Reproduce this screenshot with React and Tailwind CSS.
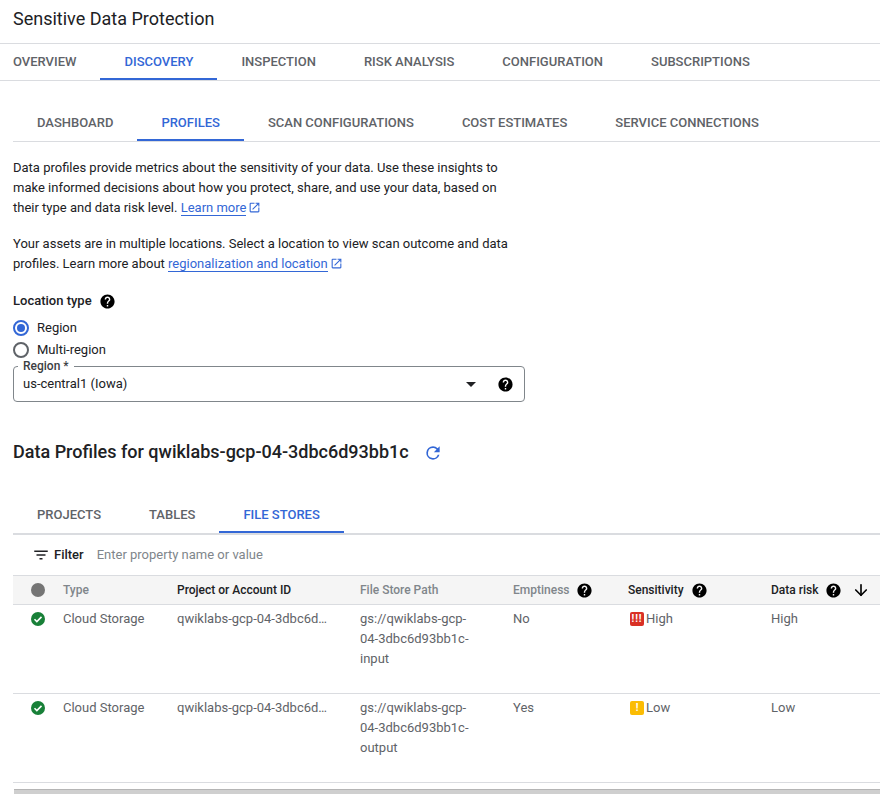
import { ArrowDown } from 'lucide-react'

const mainTabs = ['OVERVIEW', 'DISCOVERY', 'INSPECTION', 'RISK ANALYSIS', 'CONFIGURATION', 'SUBSCRIPTIONS']
const subTabs = ['DASHBOARD', 'PROFILES', 'SCAN CONFIGURATIONS', 'COST ESTIMATES', 'SERVICE CONNECTIONS']
const storeTabs = ['PROJECTS', 'TABLES', 'FILE STORES']

const rows = [
  { path: ['gs://qwiklabs-gcp-', '04-3dbc6d93bb1c-', 'input'], empty: 'No', level: 'High' },
  { path: ['gs://qwiklabs-gcp-', '04-3dbc6d93bb1c-', 'output'], empty: 'Yes', level: 'Low' },
]

function Help({ className = '' }) {
  return (
    <svg viewBox="0 0 24 24" className={`h-[17px] w-[17px] shrink-0 ${className}`}>
      <path
        fill="#000"
        d="M12 2C6.48 2 2 6.48 2 12s4.48 10 10 10 10-4.48 10-10S17.52 2 12 2zm1 17h-2v-2h2v2zm2.07-7.75-.9.92C13.45 12.9 13 13.5 13 15h-2v-.5c0-1.1.45-2.1 1.17-2.83l1.24-1.26c.37-.36.59-.86.59-1.41 0-1.1-.9-2-2-2s-2 .9-2 2H8c0-2.21 1.79-4 4-4s4 1.79 4 4c0 .88-.36 1.68-.93 2.25z"
      />
    </svg>
  )
}

function ExternalLink() {
  return (
    <svg viewBox="0 0 24 24" className="ml-[2px] inline-block h-[13px] w-[13px] align-[-2px]" fill="#3367d6">
      <path d="M19 19H5V5h7V3H5a2 2 0 0 0-2 2v14a2 2 0 0 0 2 2h14c1.1 0 2-.9 2-2v-7h-2v7zM14 3v2h3.59l-9.83 9.83 1.41 1.41L19 6.41V10h2V3h-7z" />
    </svg>
  )
}

function Tabs({ items, active, className = '', tabClass = '' }) {
  return (
    <div className={`flex border-b border-[#dadce0] ${className}`}>
      {items.map((t) => (
        <div
          key={t}
          className={`flex items-center border-b-[2px] px-6 pt-[2px] text-[13px] font-medium ${tabClass} ${
            t === active ? 'border-[#3367d6] text-[#3367d6]' : 'border-transparent text-[#5f6368]'
          }`}
        >
          {t}
        </div>
      ))}
    </div>
  )
}

function CheckDot() {
  return (
    <svg viewBox="0 0 16 16" className="h-[14px] w-[14px]">
      <circle cx="8" cy="8" r="8" fill="#188038" />
      <path d="M4 8.3l2.7 2.7L12 5.6" fill="none" stroke="#fff" strokeWidth="1.8" />
    </svg>
  )
}

function Level({ level }) {
  const high = level === 'High'
  return (
    <span className="ml-[2px] flex items-center gap-[2px]">
      <span
        className={`flex h-[14px] w-[14px] items-center justify-center rounded-[2px] text-[10px] leading-none font-bold text-white ${
          high ? 'bg-[#d93025] tracking-[1px]' : 'bg-[#fbbc04]'
        }`}
      >
        {high ? '!!!' : '!'}
      </span>
      {level}
    </span>
  )
}

export default function App() {
  return (
    <div className="h-[794px] w-[880px] overflow-hidden bg-white font-['Roboto',sans-serif] text-[13px] leading-5 text-[#202124]">
      <div className="flex h-11 items-center border-b border-[#dadce0] px-[13px] pb-[6px] text-[18px] text-[#202124]">
        Sensitive Data Protection
      </div>

      <Tabs items={mainTabs} active="DISCOVERY" className="h-[37px]" tabClass="first:pl-[13px] first:pr-6" />

      <div className="pl-[13px]">
        <Tabs items={subTabs} active="PROFILES" className="mt-[23px] h-[38px]" />

        <p className="mt-[16px] w-[500px]">
          Data profiles provide metrics about the sensitivity of your data. Use these insights to
          make informed decisions about how you protect, share, and use your data, based on
          their type and data risk level.{' '}
          <span className="whitespace-nowrap">
            <a className="border-b border-[#3367d6] text-[#3367d6]">Learn more</a>
            <ExternalLink />
          </span>
        </p>
        <p className="mt-4 w-[510px]">
          Your assets are in multiple locations. Select a location to view scan outcome and data
          profiles. Learn more about{' '}
          <span className="whitespace-nowrap">
            <a className="border-b border-[#3367d6] text-[#3367d6]">regionalization and location</a>
            <ExternalLink />
          </span>
        </p>

        <div className="mt-[17px] flex items-center gap-[7px] font-medium">
          Location type
          <Help />
        </div>
        <div className="mt-[6px] flex h-[22px] items-center gap-2">
          <span className="flex h-4 w-4 items-center justify-center rounded-full border-2 border-[#3367d6]">
            <span className="h-2 w-2 rounded-full bg-[#3367d6]" />
          </span>
          Region
        </div>
        <div className="flex h-[22px] items-center gap-2">
          <span className="h-4 w-4 rounded-full border-2 border-[#5f6368]" />
          Multi-region
        </div>

        <div className="relative mt-[5px] flex h-[36px] w-[512px] items-center rounded border border-[#80868b] pr-[10px] pl-[9px]">
          <span className="absolute top-[-9px] left-[4px] bg-white px-[5px] text-xs leading-4 font-medium text-[#3c4043]">
            Region *
          </span>
          <span className="flex-1">us-central1 (Iowa)</span>
          <span className="mr-[21px] h-0 w-0 border-x-[5px] border-t-[5px] border-x-transparent border-t-[#202124]" />
          <Help />
        </div>

        <div className="mt-[38px] flex items-center text-[18px] leading-6 font-medium">
          Data Profiles for qwiklabs-gcp-04-3dbc6d93bb1c
          <svg viewBox="0 0 24 24" className="mt-[2px] ml-[14px] h-5 w-5" fill="#3367d6">
            <path d="M17.65 6.35A7.96 7.96 0 0 0 12 4a8 8 0 1 0 7.73 10h-2.08A6 6 0 1 1 12 6c1.66 0 3.14.69 4.22 1.78L13 11h7V4l-2.35 2.35z" />
          </svg>
        </div>

        <Tabs items={storeTabs} active="FILE STORES" className="mt-[33px] h-[38px] border-b-2" />

        <div className="flex h-[40px] items-center pl-[19px]">
          <svg viewBox="0 0 24 24" className="h-[18px] w-[18px]" fill="#202124">
            <path d="M10 18h4v-2h-4v2zM3 6v2h18V6H3zm3 7h12v-2H6v2z" />
          </svg>
          <span className="ml-1 font-medium">Filter</span>
          <span className="ml-[13px] text-[#80868b]">Enter property name or value</span>
        </div>

        <div className="grid h-[30px] grid-cols-[50px_114px_183px_153px_115px_143px_1fr] items-center border-y border-[#dadce0] bg-[#f5f5f5] text-xs font-medium">
          <span className="pl-[18px]">
            <span className="block h-[14px] w-[14px] rounded-full bg-[#757575]" />
          </span>
          <span className="text-[#80868b]">Type</span>
          <span className="text-[#202124]">Project or Account ID</span>
          <span className="text-[#80868b]">File Store Path</span>
          <span className="flex items-center gap-[6px] text-[#80868b]">
            Emptiness
            <Help />
          </span>
          <span className="flex items-center gap-[7px] text-[#202124]">
            Sensitivity
            <Help />
          </span>
          <span className="flex items-center gap-[7px] whitespace-nowrap text-[#202124]">
            Data risk
            <Help />
            <ArrowDown className="ml-[3px] h-[18px] w-[18px] text-black" strokeWidth={2.2} />
          </span>
        </div>

        {rows.map((row) => (
          <div
            key={row.empty}
            className="grid h-[89px] grid-cols-[50px_114px_183px_153px_115px_143px_1fr] items-start border-b border-[#dadce0] pt-[4px] text-[#5f6368]"
          >
            <span className="pt-[3px] pl-[18px]">
              <CheckDot />
            </span>
            <span>Cloud Storage</span>
            <span>qwiklabs-gcp-04-3dbc6d…</span>
            <span>
              {row.path.map((line) => (
                <span key={line} className="block">
                  {line}
                </span>
              ))}
            </span>
            <span>{row.empty}</span>
            <Level level={row.level} />
            <span>{row.level}</span>
          </div>
        ))}

        <div className="mt-[6px] ml-px h-2 border-t border-[#b5b5b5] bg-[#cfcfcf]" />
      </div>
    </div>
  )
}
